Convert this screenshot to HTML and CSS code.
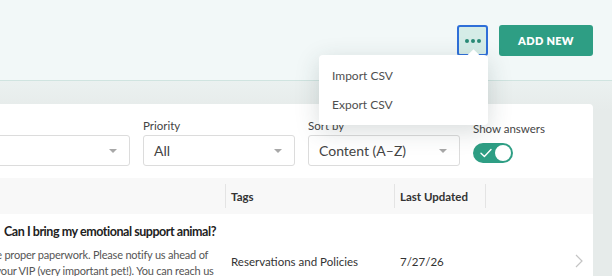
FILE: index.html
```html
<!DOCTYPE html>
<html>
<head>
<meta charset="utf-8">
<link rel="stylesheet" href="styles.css">
</head>
<body>
<header class="topbar">
  <div class="more-wrap">
    <button class="more-btn" aria-label="More actions">
      <span class="dot"></span><span class="dot"></span><span class="dot"></span>
    </button>
    <div class="menu">
      <div class="menu-item">Import CSV</div>
      <div class="menu-item">Export CSV</div>
    </div>
  </div>
  <button class="add-btn">ADD NEW</button>
</header>
<main class="content">
  <section class="card">
    <div class="filters">
      <div class="filter filter-wide">
        <label class="filter-label">&nbsp;</label>
        <div class="select"><span></span><span class="caret"></span></div>
      </div>
      <div class="filter">
        <label class="filter-label">Priority</label>
        <div class="select"><span>All</span><span class="caret"></span></div>
      </div>
      <div class="filter">
        <label class="filter-label">Sort by</label>
        <div class="select"><span>Content (A–Z)</span><span class="caret"></span></div>
      </div>
      <div class="filter filter-toggle">
        <label class="filter-label">Show answers</label>
        <div class="toggle">
          <svg class="check" width="12" height="10" viewBox="0 0 12 10"><path d="M1 5.2 L4.4 8.4 L11 1.6" fill="none" stroke="#fff" stroke-width="1.4" stroke-linecap="round" stroke-linejoin="round"/></svg>
          <span class="knob"></span>
        </div>
      </div>
    </div>
    <div class="table">
      <div class="th th-content"></div>
      <div class="th"><span class="th-text">Tags</span></div>
      <div class="th"><span class="th-text">Last Updated</span></div>
      <div class="th th-last"></div>

      <div class="td td-content">
        <div class="q-title">Can I bring my emotional support animal?</div>
        <div class="q-answer">Yes, with the proper paperwork. Please notify us ahead of<br>time about your VIP (very important pet!). You can reach us</div>
      </div>
      <div class="td td-mid">Reservations and Policies</div>
      <div class="td td-mid">7/27/26</div>
      <div class="td td-mid td-chevron">
        <svg width="8" height="14" viewBox="0 0 8 14"><path d="M1 1 L7 7 L1 13" fill="none" stroke="#c4c4c4" stroke-width="1.2"/></svg>
      </div>
    </div>
  </section>
</main>
</body>
</html>
```
FILE: styles.css
```css
* { box-sizing: border-box; }
html, body { margin: 0; padding: 0; }
body {
  width: 612px;
  height: 276px;
  overflow: hidden;
  background: #e7edec;
  font-family: Lato, "Liberation Sans", sans-serif;
  color: #333;
}
.topbar {
  height: 81px;
  background: #f2f8f8;
  border-bottom: 1px solid #d0e4e0;
  display: flex;
  justify-content: flex-end;
  align-items: flex-start;
  padding: 25px 19px 0 0;
  gap: 11px;
  position: relative;
  z-index: 2;
}
.more-wrap { position: relative; }
.more-btn {
  width: 31px;
  height: 31px;
  border: 2px solid #2f6fd8;
  border-radius: 3px;
  background: #d5ece7;
  display: flex;
  align-items: center;
  justify-content: center;
  gap: 2px;
  padding: 0;
}
.dot {
  width: 4px;
  height: 4px;
  border-radius: 50%;
  background: #2a8b76;
}
.menu {
  position: absolute;
  top: 30px;
  right: 0;
  width: 169px;
  height: 70px;
  background: #fff;
  border-radius: 4px;
  box-shadow: 0 6px 24px rgba(40, 60, 60, 0.18);
  padding-top: 6px;
}
.menu::before {
  content: "";
  position: absolute;
  top: -4px;
  right: 10px;
  width: 9px;
  height: 9px;
  background: #fff;
  transform: rotate(45deg);
}
.menu-item {
  position: relative;
  height: 29px;
  line-height: 29px;
  padding-left: 13px;
  font-size: 12px;
  color: #4f4f4f;
}
.add-btn {
  width: 94px;
  height: 31px;
  border: none;
  border-radius: 3px;
  background: #2e9e84;
  color: #fff;
  font-family: Lato, "Liberation Sans", sans-serif;
  font-weight: 800;
  font-size: 11px;
  letter-spacing: 0.3px;
  padding: 0;
}
.content {
  height: 195px;
  background: linear-gradient(#ebf1f0, #e6ebea 30px);
  padding: 23px 19px 0 0;
}
.card {
  margin-left: -100px;
  background: #fff;
  border-radius: 0 4px 0 0;
  height: 300px;
}
.filters {
  display: flex;
  gap: 13px;
  padding: 13px 0 0 20px;
  height: 74px;
}
.filter { display: flex; flex-direction: column; width: 152px; }
.filter-wide { width: 210px; }
.filter-toggle { width: 100px; }
.filter-label {
  font-size: 11.5px;
  color: #444;
  height: 18px;
  line-height: 18px;
}
.select {
  height: 31px;
  border: 1px solid #dcdcdc;
  border-radius: 3px;
  display: flex;
  align-items: center;
  justify-content: space-between;
  padding: 0 12px 0 10px;
  font-size: 14px;
  color: #444;
}
.caret {
  width: 0;
  height: 0;
  border-left: 4px solid transparent;
  border-right: 4px solid transparent;
  border-top: 4px solid #a8a8a8;
}
.filter-toggle .filter-label { margin-top: 3px; }
.toggle {
  margin-top: 5px;
  width: 40px;
  height: 20px;
  border-radius: 10px;
  background: #2e9e84;
  position: relative;
  display: flex;
  align-items: center;
  padding-left: 7px;
}
.knob {
  position: absolute;
  right: 2px;
  top: 2px;
  width: 16px;
  height: 16px;
  border-radius: 50%;
  background: #fff;
}
.table {
  display: grid;
  grid-template-columns: 325px 169px 91px 108px;
}
.th {
  height: 36px;
  background: #f8f8f8;
  display: flex;
  align-items: center;
  font-size: 11.5px;
  font-weight: 700;
  color: #333;
  position: relative;
}
.th-text { padding-left: 6px; }
.th + .th::before {
  content: "";
  position: absolute;
  left: 0;
  top: 6px;
  bottom: 6px;
  width: 1px;
  background: #e4e4e4;
}
.td {
  height: 94px;
  font-size: 11.5px;
  color: #333;
}
.td-content { padding: 9px 0 0 40px; }
.q-title {
  margin-left: 64px;
  font-size: 12.5px;
  font-weight: 700;
  letter-spacing: -0.45px;
  color: #222;
  line-height: 18px;
  white-space: nowrap;
}
.q-answer {
  margin: 6px 0 0 3px;
  font-size: 11px;
  letter-spacing: -0.2px;
  line-height: 16px;
  color: #555;
  white-space: nowrap;
}
.td-mid {
  display: flex;
  align-items: center;
  padding-left: 6px;
}
.td-chevron {
  justify-content: flex-end;
  padding-right: 10px;
}
```
